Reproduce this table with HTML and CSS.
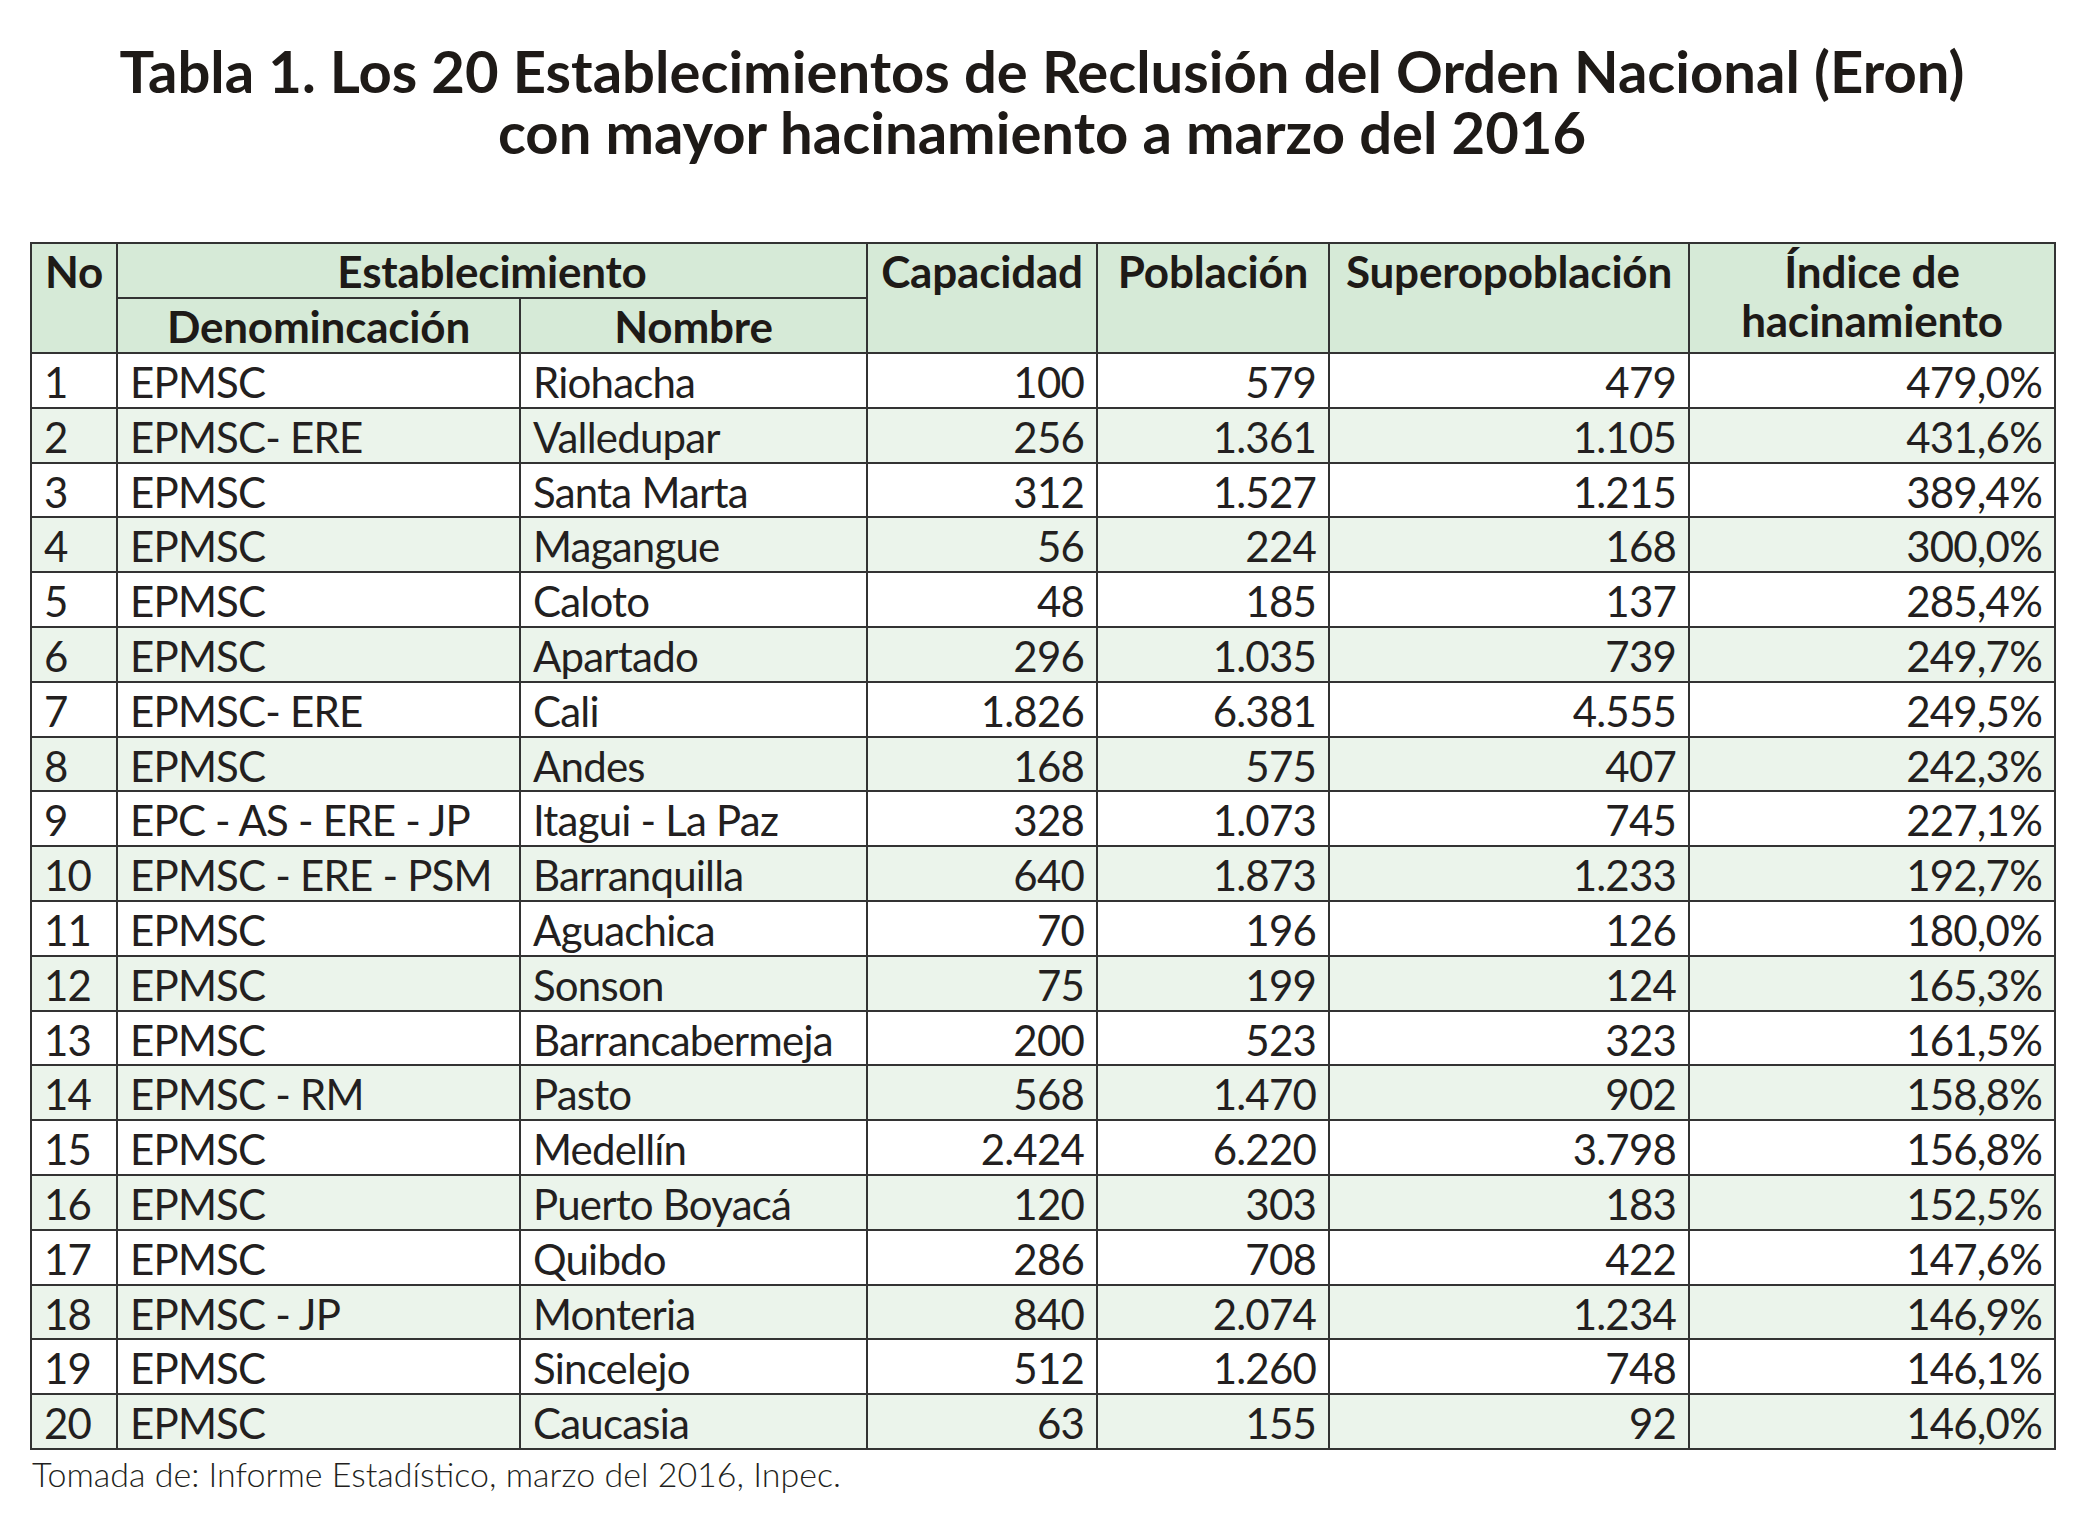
FILE: index.html
```html
<!DOCTYPE html>
<html lang="es">
<head>
<meta charset="utf-8">
<title>Tabla 1</title>
<link rel="stylesheet" href="styles.css">
</head>
<body>
<div class="page">
  <h1 class="title">Tabla 1. Los 20 Establecimientos de Reclusión del Orden Nacional (Eron)<br>con mayor hacinamiento a marzo del 2016</h1>
  <table class="data">
    <colgroup>
      <col class="c-no"><col class="c-den"><col class="c-nom"><col class="c-cap"><col class="c-pob"><col class="c-sup"><col class="c-ind">
    </colgroup>
    <thead>
      <tr>
        <th rowspan="2">No</th>
        <th colspan="2">Establecimiento</th>
        <th rowspan="2">Capacidad</th>
        <th rowspan="2">Población</th>
        <th rowspan="2">Superopoblación</th>
        <th rowspan="2">Índice de<br>hacinamiento</th>
      </tr>
      <tr>
        <th>Denomincación</th>
        <th>Nombre</th>
      </tr>
    </thead>
    <tbody>
      <tr><td>1</td><td>EPMSC</td><td>Riohacha</td><td class="n">100</td><td class="n">579</td><td class="n">479</td><td class="n">479,0%</td></tr>
      <tr><td>2</td><td>EPMSC- ERE</td><td>Valledupar</td><td class="n">256</td><td class="n">1.361</td><td class="n">1.105</td><td class="n">431,6%</td></tr>
      <tr><td>3</td><td>EPMSC</td><td>Santa Marta</td><td class="n">312</td><td class="n">1.527</td><td class="n">1.215</td><td class="n">389,4%</td></tr>
      <tr><td>4</td><td>EPMSC</td><td>Magangue</td><td class="n">56</td><td class="n">224</td><td class="n">168</td><td class="n">300,0%</td></tr>
      <tr><td>5</td><td>EPMSC</td><td>Caloto</td><td class="n">48</td><td class="n">185</td><td class="n">137</td><td class="n">285,4%</td></tr>
      <tr><td>6</td><td>EPMSC</td><td>Apartado</td><td class="n">296</td><td class="n">1.035</td><td class="n">739</td><td class="n">249,7%</td></tr>
      <tr><td>7</td><td>EPMSC- ERE</td><td>Cali</td><td class="n">1.826</td><td class="n">6.381</td><td class="n">4.555</td><td class="n">249,5%</td></tr>
      <tr><td>8</td><td>EPMSC</td><td>Andes</td><td class="n">168</td><td class="n">575</td><td class="n">407</td><td class="n">242,3%</td></tr>
      <tr><td>9</td><td>EPC - AS - ERE - JP</td><td>Itagui - La Paz</td><td class="n">328</td><td class="n">1.073</td><td class="n">745</td><td class="n">227,1%</td></tr>
      <tr><td>10</td><td>EPMSC - ERE - PSM</td><td>Barranquilla</td><td class="n">640</td><td class="n">1.873</td><td class="n">1.233</td><td class="n">192,7%</td></tr>
      <tr><td>11</td><td>EPMSC</td><td>Aguachica</td><td class="n">70</td><td class="n">196</td><td class="n">126</td><td class="n">180,0%</td></tr>
      <tr><td>12</td><td>EPMSC</td><td>Sonson</td><td class="n">75</td><td class="n">199</td><td class="n">124</td><td class="n">165,3%</td></tr>
      <tr><td>13</td><td>EPMSC</td><td>Barrancabermeja</td><td class="n">200</td><td class="n">523</td><td class="n">323</td><td class="n">161,5%</td></tr>
      <tr><td>14</td><td>EPMSC - RM</td><td>Pasto</td><td class="n">568</td><td class="n">1.470</td><td class="n">902</td><td class="n">158,8%</td></tr>
      <tr><td>15</td><td>EPMSC</td><td>Medellín</td><td class="n">2.424</td><td class="n">6.220</td><td class="n">3.798</td><td class="n">156,8%</td></tr>
      <tr><td>16</td><td>EPMSC</td><td>Puerto Boyacá</td><td class="n">120</td><td class="n">303</td><td class="n">183</td><td class="n">152,5%</td></tr>
      <tr><td>17</td><td>EPMSC</td><td>Quibdo</td><td class="n">286</td><td class="n">708</td><td class="n">422</td><td class="n">147,6%</td></tr>
      <tr><td>18</td><td>EPMSC - JP</td><td>Monteria</td><td class="n">840</td><td class="n">2.074</td><td class="n">1.234</td><td class="n">146,9%</td></tr>
      <tr><td>19</td><td>EPMSC</td><td>Sincelejo</td><td class="n">512</td><td class="n">1.260</td><td class="n">748</td><td class="n">146,1%</td></tr>
      <tr><td>20</td><td>EPMSC</td><td>Caucasia</td><td class="n">63</td><td class="n">155</td><td class="n">92</td><td class="n">146,0%</td></tr>
    </tbody>
  </table>
  <p class="source">Tomada de: Informe Estadístico, marzo del 2016, Inpec.</p>
</div>
</body>
</html>
```

FILE: styles.css
```css
html, body {
  margin: 0;
  padding: 0;
  background: #ffffff;
}

body {
  font-family: Lato, "Noto Sans", "Liberation Sans", sans-serif;
  color: #231f20;
}

.page {
  width: 2024px;
  padding: 0 0 0 30px;
}

.title {
  margin: 0 0 80px;
  padding-top: 40px;
  text-align: center;
  font-size: 58px;
  font-weight: 700;
  line-height: 61px;
  color: #1e1a17;
}

.data {
  width: 2024px;
  table-layout: fixed;
  border-collapse: collapse;
  border: 2px solid #4a4a4a;
}

.c-no { width: 86px; }
.c-den { width: 403px; }
.c-nom { width: 347px; }
.c-cap { width: 230px; }
.c-pob { width: 232px; }
.c-sup { width: 360px; }
.c-ind { width: 366px; }

.data thead tr {
  height: 55px;
}

.data tbody tr {
  height: 54.8px;
}

.data th,
.data td {
  border: 2px solid #333333;
  padding: 0;
  white-space: nowrap;
  overflow: hidden;
}

.data th {
  background: #d6ead7;
  font-size: 44px;
  font-weight: 700;
  line-height: 49px;
  vertical-align: top;
  text-align: center;
  padding: 3px 4px 0;
  letter-spacing: -0.2px;
  color: #1e1a17;
}

.data td {
  font-size: 42px;
  font-weight: 400;
  line-height: 47px;
  vertical-align: top;
  text-align: left;
  padding: 5px 6px 0 12px;
  letter-spacing: -0.8px;
}

.data td.n {
  text-align: right;
  padding-right: 12px;
  padding-left: 4px;
}

.data tbody tr:nth-child(even) td {
  background: #ebf4eb;
}

.source {
  margin: 4px 0 0;
  padding-left: 2px;
  font-size: 34px;
  font-weight: 300;
  line-height: 40px;
}
```
